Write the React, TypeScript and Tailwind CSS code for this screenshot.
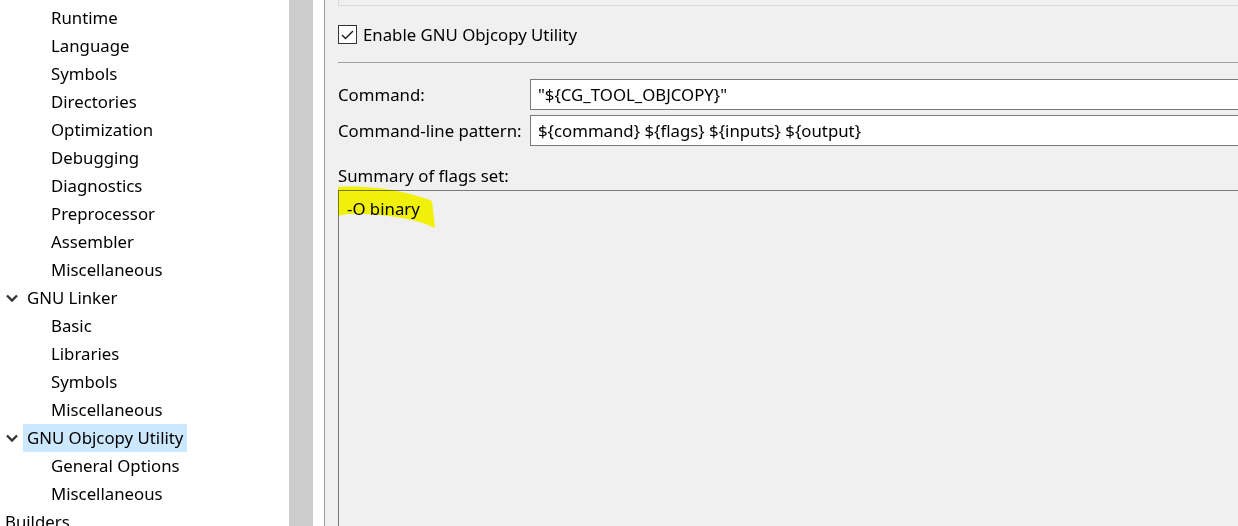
import React from "react";

type TreeItem = { label: string; level: 0 | 1 | 2; expanded?: boolean; selected?: boolean };

const tree: TreeItem[] = [
  { label: "Compiler Options", level: 2 },
  { label: "Runtime", level: 2 },
  { label: "Language", level: 2 },
  { label: "Symbols", level: 2 },
  { label: "Directories", level: 2 },
  { label: "Optimization", level: 2 },
  { label: "Debugging", level: 2 },
  { label: "Diagnostics", level: 2 },
  { label: "Preprocessor", level: 2 },
  { label: "Assembler", level: 2 },
  { label: "Miscellaneous", level: 2 },
  { label: "GNU Linker", level: 1, expanded: true },
  { label: "Basic", level: 2 },
  { label: "Libraries", level: 2 },
  { label: "Symbols", level: 2 },
  { label: "Miscellaneous", level: 2 },
  { label: "GNU Objcopy Utility", level: 1, expanded: true, selected: true },
  { label: "General Options", level: 2 },
  { label: "Miscellaneous", level: 2 },
  { label: "Builders", level: 0 },
];

function Chevron() {
  return (
    <svg width="12" height="8" viewBox="0 0 12 8" className="shrink-0">
      <path d="M1 1.5 L6 6.5 L11 1.5" fill="none" stroke="#333" strokeWidth="2.4" />
    </svg>
  );
}

function TreeRow({ item }: { item: TreeItem }) {
  return (
    <div className="flex h-[28px] items-center whitespace-nowrap">
      {item.level === 0 && <span className="pl-[5px]">{item.label}</span>}
      {item.level === 1 && (
        <div className="flex items-center">
          <div className="w-[23px] pl-[6px] flex items-center">
            <Chevron />
          </div>
          <span className={item.selected ? "bg-[#cce8ff] px-[4px] h-[28px] leading-[28px]" : "px-[4px]"}>
            {item.label}
          </span>
        </div>
      )}
      {item.level === 2 && <span className="pl-[51px]">{item.label}</span>}
    </div>
  );
}

export default function App() {
  return (
    <div
      className="w-[1238px] h-[526px] overflow-hidden flex text-[16.8px] text-black"
      style={{ fontFamily: '"Noto Sans", "Open Sans", sans-serif' }}
    >
      {/* tree */}
      <div className="w-[289px] bg-white overflow-hidden">
        <div className="-mt-[24px]">
          {tree.map((item, i) => (
            <TreeRow key={i} item={item} />
          ))}
        </div>
      </div>
      <div className="w-[24px] bg-[#cdcdcd]" />
      <div className="w-[11px] bg-white" />
      <div className="flex-1 bg-[#f0f0f0] border-l border-[#a0a0a0] pl-[13px] relative">
        <div className="-mr-[20px] flex flex-col h-full">
          <div className="h-[6px] border-l border-b border-[#dadada]" />
          <div className="h-[56px] flex items-center">
            <div className="flex items-center gap-[6px] pt-[1px]">
              <div className="w-[19px] h-[19px] border border-[#333] bg-white flex items-center justify-center">
                <svg width="13" height="10" viewBox="0 0 13 10">
                  <path d="M1 5 L4.5 8.5 L12 1" fill="none" stroke="#222" strokeWidth="1.5" />
                </svg>
              </div>
              <span>Enable GNU Objcopy Utility</span>
            </div>
          </div>
          <div className="border-t border-[#a0a0a0]" />
          <div className="mt-[16px] flex flex-col gap-[5px]">
            <div className="flex items-center h-[31px]">
              <span className="w-[192px]">Command:</span>
              <div className="flex-1 h-[31px] bg-white border border-[#7a7a7a] flex items-center pl-[7px]">
                "${"{"}CG_TOOL_OBJCOPY{"}"}"
              </div>
            </div>
            <div className="flex items-center h-[31px]">
              <span className="w-[192px]">Command-line pattern:</span>
              <div className="flex-1 h-[31px] bg-white border border-[#7a7a7a] flex items-center pl-[7px]">
                ${"{"}command{"}"} ${"{"}flags{"}"} ${"{"}inputs{"}"} ${"{"}output{"}"}
              </div>
            </div>
          </div>
          <div className="mt-[16px] h-[28px] flex items-center">Summary of flags set:</div>
          <div className="flex-1 border-l border-t border-[#7a7a7a] pl-[8px] pt-[5px]">
            <span className="relative">-O binary</span>
          </div>
        </div>
        <svg
          className="absolute left-[12px] top-[186px] pointer-events-none mix-blend-multiply"
          width="100"
          height="44"
          viewBox="0 0 100 44"
        >
          <path
            d="M1 1 C 15 0, 30 1, 40 2 C 60 4, 80 9, 95 15 L 98 42 C 90 38, 80 35, 70 33 C 55 30, 40 28, 25 28 C 12 27, 5 29, 1 30 Z"
            fill="#ffff08"
          />
        </svg>
      </div>
    </div>
  );
}
